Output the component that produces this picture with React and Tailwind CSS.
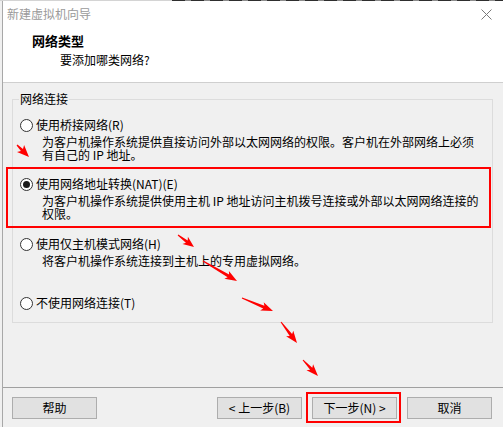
import React from 'react';

const font = { fontFamily: '"Noto Sans CJK SC", "Microsoft YaHei", sans-serif' };

// 单个单选按钮行
const Radio = ({ checked, children }) => (
    <div className="flex items-center h-[16px]">
        <span className="w-[13px] h-[13px] rounded-full border border-[#333] bg-white flex items-center justify-center shrink-0">
            {checked && <span className="w-[7px] h-[7px] rounded-full bg-[#1a1a1a]" />}
        </span>
        <span className="ml-[3px] leading-[16px]">{children}</span>
    </div>
);

const Desc = ({ lines }) => (
    <div className="pl-[22px] mt-[2px] leading-[13px] whitespace-nowrap">
        {lines.map((l) => (
            <div key={l} className="h-[13px]">{l}</div>
        ))}
    </div>
);

// 红色箭头(标注)
const arrowPoints = (x1, y1, x2, y2, hl = 12, hw = 9, sw = 3) => {
    const dx = x2 - x1;
    const dy = y2 - y1;
    const len = Math.hypot(dx, dy);
    const ux = dx / len;
    const uy = dy / len;
    const nx = -uy;
    const ny = ux;
    const h = Math.min(hl, len);
    const bx = x2 - ux * h;
    const by = y2 - uy * h;
    const nb = 2;
    const pts = [
        [x1 + nx * 0.5, y1 + ny * 0.5],
        [bx + ux * nb + nx * sw / 2, by + uy * nb + ny * sw / 2],
        [bx + nx * hw / 2, by + ny * hw / 2],
        [x2, y2],
        [bx - nx * hw / 2, by - ny * hw / 2],
        [bx + ux * nb - nx * sw / 2, by + uy * nb - ny * sw / 2],
        [x1 - nx * 0.5, y1 - ny * 0.5],
    ];
    return pts.map((p) => p[0].toFixed(1) + ',' + p[1].toFixed(1)).join(' ');
};

const arrows = [
    [17, 145, 29, 157, 12, 10],
    [178, 235, 194, 247, 11, 9],
    [203, 261, 237, 281, 12, 9],
    [242, 298, 273, 311, 12, 9],
    [281, 322, 297, 343, 12, 9],
    [303, 360, 318, 376, 12, 9],
];

const Button = ({ children, className = '' }) => (
    <button className={`w-[85px] h-[22px] bg-[#e1e1e1] border border-[#adadad] text-[12px] leading-[20px] text-black ${className}`}>
        {children}
    </button>
);

export default function App() {
    return (
        <div className="w-[503px] h-[427px] relative overflow-hidden bg-[#f0f0f0] text-[12px] text-black" style={font}>
            {/* 背后窗口的一像素边 */}
            <div className="flex h-[1px]">
                <div className="w-[172px] bg-[#d4d4d4]" />
                <div className="flex-1 bg-[repeating-linear-gradient(90deg,#2e2e2e_0px,#2e2e2e_13px,#8c8c8c_13px,#8c8c8c_19px)]" />
            </div>

            <div className="ml-[2px] border-l border-[#a8a8a8] h-[426px] flex flex-col">
                {/* 标题栏 */}
                <div className="h-[26px] bg-white flex items-center justify-between pl-[4px] pr-[11px]">
                    <span className="text-[#9a9a9a] leading-[16px]">新建虚拟机向导</span>
                    <svg width="11" height="11" viewBox="0 0 11 11">
                        <path d="M0.5 0.5 L10.5 10.5 M10.5 0.5 L0.5 10.5" stroke="#7a7a7a" strokeWidth="1" fill="none" />
                    </svg>
                </div>

                {/* 头部 */}
                <div className="h-[56px] bg-white border-b border-[#cfcfcf] pt-[6px]">
                    <div className="pl-[29px] font-bold text-[13px] leading-[16px]">网络类型</div>
                    <div className="pl-[57px] mt-[3px] leading-[16px]">要添加哪类网络?</div>
                </div>

                {/* 网络连接分组 */}
                <div className="relative ml-[9px] mt-[16px] w-[481px] border border-[#dcdcdc] pt-[17px] pb-[11px] pl-[7px]">
                    <span className="absolute left-[6px] -top-[9px] px-[1px] bg-[#f0f0f0] leading-[16px]">网络连接</span>

                    <Radio>使用桥接网络(R)</Radio>
                    <Desc lines={['为客户机操作系统提供直接访问外部以太网网络的权限。客户机在外部网络上必须', '有自己的 IP 地址。']} />

                    <div className="relative mt-[15px]">
                        <Radio checked>使用网络地址转换(NAT)(E)</Radio>
                        <Desc lines={['为客户机操作系统提供使用主机 IP 地址访问主机拨号连接或外部以太网网络连接的', '权限。']} />
                        <div className="absolute -left-[14px] right-[1px] -top-[9px] -bottom-[8px] border-2 border-[#ff0000] pointer-events-none" />
                    </div>

                    <div className="mt-[16px]">
                        <Radio>使用仅主机模式网络(H)</Radio>
                        <Desc lines={['将客户机操作系统连接到主机上的专用虚拟网络。']} />
                    </div>

                    <div className="mt-[28px]">
                        <Radio>不使用网络连接(T)</Radio>
                    </div>
                </div>

                {/* 底部按钮 */}
                <div className="mt-[64px] border-t border-[#a0a0a0] pt-[9px] flex pl-[9px]">
                    <Button>帮助</Button>
                    <Button className="ml-[120px]">&lt; 上一步(B)</Button>
                    <div className="relative ml-[10px]">
                        <Button>下一步(N) &gt;</Button>
                        <div className="absolute -left-[6px] -right-[4px] -top-[5px] -bottom-[4px] border-2 border-[#ff0000] pointer-events-none" />
                    </div>
                    <Button className="ml-[10px]">取消</Button>
                </div>
            </div>

            {/* 红色箭头 */}
            <svg className="absolute inset-0 pointer-events-none" width="503" height="427">
                {arrows.map((a, i) => (
                    <polygon key={i} points={arrowPoints(a[0], a[1], a[2], a[3], a[4], a[5])} fill="#ff0000" />
                ))}
            </svg>
        </div>
    );
}
